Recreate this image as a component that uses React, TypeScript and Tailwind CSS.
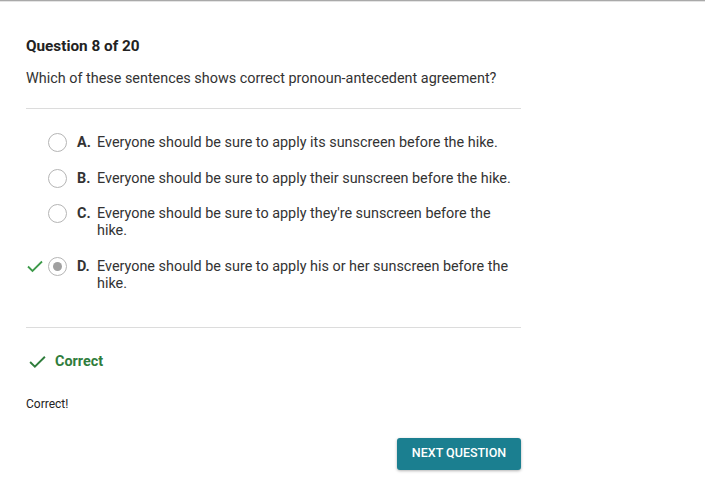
import React from 'react';

interface Option {
  letter: string;
  text: string;
  selected?: boolean;
}

const options: Option[] = [
  { letter: 'A.', text: 'Everyone should be sure to apply its sunscreen before the hike.' },
  { letter: 'B.', text: 'Everyone should be sure to apply their sunscreen before the hike.' },
  { letter: 'C.', text: "Everyone should be sure to apply they're sunscreen before the hike." },
  { letter: 'D.', text: 'Everyone should be sure to apply his or her sunscreen before the hike.', selected: true },
];

const Check = ({ className }: { className?: string }) => (
  <svg className={className} viewBox="0 0 18 18" fill="none">
    <path d="M2 9.5L6.5 14L16 4.5" stroke="currentColor" strokeWidth="1.8" />
  </svg>
);

const App: React.FC = () => {
  return (
    <div className="min-h-[499px] bg-white font-['Roboto',sans-serif] text-[#333]">
      <div className="h-[1px] bg-[#a9a9a9]" />
      <div className="h-[1px] bg-[#e4e4e4]" />
      <div className="w-[495px] ml-[26px] pt-[35px]">
        <h1 className="text-[15.3px] font-bold leading-[18px] text-[#222]">Question 8 of 20</h1>
        <p className="mt-[15px] text-[14.4px] leading-[18px] text-[#333]">
          Which of these sentences shows correct pronoun-antecedent agreement?
        </p>
        <div className="mt-[20px] h-px bg-[#dcdcdc]" />
        <ul className="flex flex-col gap-[18.5px] pt-[25px] pb-[35.5px]">
          {options.map((o) => (
            <li key={o.letter} className="flex items-start">
              <div className="w-[22px] h-[17px] flex items-center">
                {o.selected && <Check className="w-[18px] h-[18px] text-[#3d9a4a]" />}
              </div>
              <div className="w-[19px] h-[19px] mt-[-1px] mb-[-1px] shrink-0 rounded-full border border-[#b5b5b5] flex items-center justify-center">
                {o.selected && <div className="w-[9px] h-[9px] rounded-full bg-[#a0a0a0]" />}
              </div>
              <span className="ml-[10px] w-[20px] shrink-0 text-[14.4px] leading-[17px] font-bold text-[#333]">{o.letter}</span>
              <span className="flex-1 text-[14.4px] leading-[17px] text-[#333]">{o.text}</span>
            </li>
          ))}
        </ul>
        <div className="h-px bg-[#dcdcdc]" />
        <div className="mt-[23px] flex items-center gap-[8px]">
          <Check className="w-[19px] h-[19px] ml-[2px] text-[#2f7d3c]" />
          <span className="text-[14.4px] font-bold text-[#2f7d3c]">Correct</span>
        </div>
        <p className="mt-[24px] text-[12px] leading-[14px] text-[#222]">Correct!</p>
        <div className="mt-[27px] flex justify-end">
          <button className="h-[32px] w-[124px] rounded-[3px] bg-[#1b7f90] text-white text-[12.5px] font-medium shadow-[0_1px_3px_rgba(0,0,0,0.3)]">
            NEXT QUESTION
          </button>
        </div>
      </div>
    </div>
  );
};

export default App;
